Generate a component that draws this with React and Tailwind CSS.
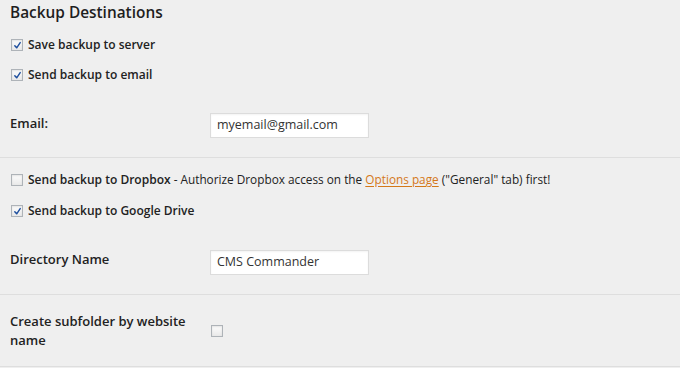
import React from "react";

function Check({ checked }) {
  return (
    <span className="relative inline-flex h-[12px] w-[12px] shrink-0 items-center justify-center border border-[#aeb3b8] bg-gradient-to-b from-[#fdfdfd] to-[#e9e9e9] shadow-[inset_0_1px_2px_rgba(0,0,0,0.1)]">
      {checked && (
        <svg viewBox="0 0 10 10" className="h-[9px] w-[9px]">
          <path d="M2 5.2 L4.1 7.6 L8 1.8" fill="none" stroke="#1e4f9e" strokeWidth="1.6" strokeLinecap="round" strokeLinejoin="round" />
        </svg>
      )}
    </span>
  );
}

function CheckRow({ checked, children, className }) {
  return (
    <div className={"flex h-[20px] items-center gap-[5px] pl-[11px] text-[12px] " + className}>
      <Check checked={checked} />
      <span className="whitespace-nowrap">{children}</span>
    </div>
  );
}

export default function App() {
  return (
    <div
      className="h-[368px] w-[680px] overflow-hidden bg-[#efefef] text-[13px] text-[#222]"
      style={{ fontFamily: '"Open Sans", "Noto Sans", sans-serif' }}
    >
      <div className="flex h-[25px] items-center pl-[10px] text-[15.4px] font-semibold text-[#1e1e1e]">
        Backup Destinations
      </div>
      <CheckRow checked className="mt-[10px] font-semibold">Save backup to server</CheckRow>
      <CheckRow checked className="mt-[10px] font-semibold">Send backup to email</CheckRow>

      <div className="mt-[28px] flex items-start">
        <div className="w-[210px] pl-[10px] font-semibold leading-[20px]">Email:</div>
        <div className="flex h-[25px] w-[159px] items-center border border-[#dcdcdc] bg-white px-[6px] text-[12.5px] text-[#333] shadow-[inset_0_1px_2px_rgba(0,0,0,0.05)]">
          myemail@gmail.com
        </div>
      </div>

      <div className="mt-[19px] border-t border-[#dedede]" />

      <CheckRow className="mt-[12px]">
        <span className="font-semibold">Send backup to Dropbox</span>
        <span className="text-[11.8px]"> - Authorize Dropbox access on the </span>
        <span className="text-[11.8px] text-[#d4781a] underline underline-offset-2">Options page</span>
        <span className="text-[11.8px]"> ("General" tab) first!</span>
      </CheckRow>
      <CheckRow checked className="mt-[11px] font-semibold">Send backup to Google Drive</CheckRow>

      <div className="mt-[29px] flex items-start">
        <div className="-mt-[1px] w-[210px] pl-[10px] font-semibold leading-[20px]">Directory Name</div>
        <div className="flex h-[25px] w-[159px] items-center border border-[#dcdcdc] bg-white px-[6px] text-[12.5px] text-[#333] shadow-[inset_0_1px_2px_rgba(0,0,0,0.05)]">
          CMS Commander
        </div>
      </div>

      <div className="mt-[19px] border-t border-[#dedede]" />

      <div className="mt-[17px] flex items-center">
        <div className="w-[211px] pl-[10px] font-semibold leading-[19px]">Create subfolder by website name</div>
        <Check />
      </div>

      <div className="mt-[16px] border-t border-[#dedede]" />
    </div>
  );
}
